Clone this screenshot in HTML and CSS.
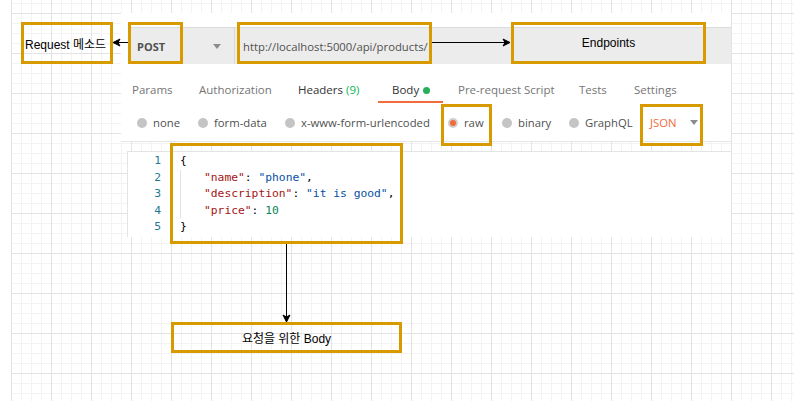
FILE: index.html
```html
<!DOCTYPE html>
<html lang="ko">
<head>
<meta charset="utf-8">
<title>Postman request diagram</title>
<link rel="stylesheet" href="styles.css">
</head>
<body>
<div class="canvas">
  <section class="shot">
    <div class="urlbar">
      <div class="method"><span class="method-name">POST</span><span class="caret"></span></div>
      <div class="url">http://localhost:5000/api/products/</div>
    </div>
    <nav class="tabs">
      <span class="tab t-params">Params</span>
      <span class="tab t-auth">Authorization</span>
      <span class="tab t-headers strong">Headers <span class="count">(9)</span></span>
      <span class="tab t-body strong active">Body <span class="dot"></span></span>
      <span class="tab t-pre">Pre-request Script</span>
      <span class="tab t-tests">Tests</span>
      <span class="tab t-settings">Settings</span>
    </nav>
    <div class="bodytypes">
      <span class="opt o-none"><span class="radio"></span>none</span>
      <span class="opt o-form"><span class="radio"></span>form-data</span>
      <span class="opt o-url"><span class="radio"></span>x-www-form-urlencoded</span>
      <span class="opt o-raw"><span class="radio on"></span>raw</span>
      <span class="opt o-bin"><span class="radio"></span>binary</span>
      <span class="opt o-gql"><span class="radio"></span>GraphQL</span>
      <span class="opt o-json"><span class="json">JSON</span><span class="caret"></span></span>
    </div>
  </section>

  <section class="code">
    <div class="gutter">
      <div>1</div><div>2</div><div>3</div><div>4</div><div>5</div>
    </div>
    <div class="lines">
      <div class="ln">{</div>
      <div class="ln"><span class="ind"></span><span class="k">"name"</span>: <span class="s">"phone"</span>,</div>
      <div class="ln"><span class="ind"></span><span class="k">"description"</span>: <span class="s">"it is good"</span>,</div>
      <div class="ln"><span class="ind"></span><span class="k">"price"</span>: <span class="n">10</span></div>
      <div class="ln">}</div>
    </div>
  </section>

  <svg class="edges" width="794" height="401" viewBox="0 0 794 401">
    <line x1="128" y1="42.5" x2="118" y2="42.5" stroke="#000" stroke-width="1"/>
    <polygon points="113,42.5 120,39 118,42.5 120,46" fill="#000" stroke="#000" stroke-width="1"/>
    <line x1="432" y1="42.5" x2="505" y2="42.5" stroke="#000" stroke-width="1"/>
    <polygon points="510,42.5 503,39 505,42.5 503,46" fill="#000" stroke="#000" stroke-width="1"/>
    <line x1="286.5" y1="244" x2="286.5" y2="317" stroke="#000" stroke-width="1"/>
    <polygon points="286.5,322 283,315 286.5,317 290,315" fill="#000" stroke="#000" stroke-width="1"/>
  </svg>

  <div class="node n-request"><span>Request 메소드</span></div>
  <div class="node n-post"></div>
  <div class="node n-url"></div>
  <div class="node n-endpoints"><span>Endpoints</span></div>
  <div class="node n-raw"></div>
  <div class="node n-json"></div>
  <div class="node n-code"></div>
  <div class="node n-body"><span>요청을 위한 Body</span></div>
</div>
</body>
</html>
```

FILE: styles.css
```css
html, body {
  margin: 0;
  padding: 0;
  background: #ffffff;
}

.canvas {
  position: relative;
  width: 794px;
  height: 401px;
  overflow: hidden;
  background-color: #ffffff;
  background-image:
    linear-gradient(90deg, #ffffff 11px, transparent 11px),
    linear-gradient(#e3e3e3 1px, transparent 1px),
    linear-gradient(90deg, #e3e3e3 1px, transparent 1px),
    linear-gradient(#f3f3f3 1px, transparent 1px),
    linear-gradient(90deg, #f3f3f3 1px, transparent 1px);
  background-size:
    100% 100%,
    40px 40px,
    40px 40px,
    10px 10px,
    10px 10px;
  background-position:
    0 0,
    11px 13px,
    11px 13px,
    11px 13px,
    11px 13px;
  background-repeat: no-repeat, repeat, repeat, repeat, repeat;
  font-family: "Liberation Sans", "Noto Sans CJK KR", sans-serif;
}

/* ---------- Postman screenshot part ---------- */
.shot {
  position: absolute;
  left: 121px;
  top: 13px;
  width: 610px;
  height: 129px;
  box-sizing: border-box;
  background: #ffffff;
  border-bottom: 1px solid #e6e6e6;
  font-family: "Open Sans", "Noto Sans", sans-serif;
  font-size: 11.5px;
  display: flex;
  flex-direction: column;
}

.urlbar {
  margin: 14px 0 0 7px;
  height: 37px;
  box-sizing: border-box;
  background: #ececec;
  border-top: 1px solid #dcdcdc;
  display: flex;
  align-items: center;
  color: #505050;
}

.method {
  width: 107px;
  height: 100%;
  box-sizing: border-box;
  border-right: 1px solid #dadada;
  padding-left: 9px;
  display: flex;
  align-items: center;
}

.method-name {
  font-weight: 700;
  font-size: 11px;
  color: #505050;
}

.caret {
  width: 0;
  height: 0;
  border-left: 4px solid transparent;
  border-right: 4px solid transparent;
  border-top: 5px solid #8c8c8c;
}

.method .caret {
  margin-left: auto;
  margin-right: 13px;
}

.url {
  padding-left: 8px;
  font-size: 11.3px;
  color: #505050;
}

.tabs {
  display: flex;
  height: 39px;
}

.tab {
  box-sizing: border-box;
  height: 39px;
  padding-top: 18px;
  line-height: 16px;
  color: #757575;
  white-space: nowrap;
  border-bottom: 2px solid transparent;
}

.tab.strong { color: #333333; }
.tab .count { color: #0cb55a; }
.tab.active { border-bottom-color: #f26b3a; }

.t-params   { width: 64px;  padding-left: 11px; }
.t-auth     { width: 100px; padding-left: 14px; }
.t-headers  { width: 93px;  padding-left: 13px; }
.t-body     { width: 65px;  padding-left: 14px; }
.t-pre      { width: 122px; padding-left: 15px; }
.t-tests    { width: 55px;  padding-left: 14px; }
.t-settings { padding-left: 14px; }

.dot {
  display: inline-block;
  width: 7px;
  height: 7px;
  border-radius: 50%;
  background: #26b05c;
  margin-left: 1px;
  vertical-align: 0;
}

.bodytypes {
  display: flex;
  align-items: center;
  height: 38px;
  padding-left: 16px;
  padding-top: 1px;
  box-sizing: border-box;
  color: #505050;
  font-size: 11.3px;
}

.opt {
  display: flex;
  align-items: center;
  white-space: nowrap;
}

.radio {
  width: 10px;
  height: 10px;
  border-radius: 50%;
  background: #c4c4c4;
  margin-right: 6px;
  box-sizing: border-box;
}

.radio.on {
  background: #f26b3a;
  border: 2px solid #cfcfcf;
}

.o-none { width: 61px; }
.o-form { width: 87px; }
.o-url  { width: 163px; }
.o-raw  { width: 54px; }
.o-bin  { width: 67px; }
.o-gql  { width: 81px; }
.o-json { width: 60px; }

.json {
  color: #f26b3a;
}

.o-json .caret {
  margin-left: auto;
  margin-right: 12px;
}

/* ---------- code editor ---------- */
.code {
  position: absolute;
  left: 127px;
  top: 151px;
  width: 604px;
  height: 86px;
  box-sizing: border-box;
  background: #ffffff;
  border-top: 1px solid #e4e4e4;
  border-left: 1px solid #e4e4e4;
  display: flex;
  padding-top: 1px;
  font-family: "DejaVu Sans Mono", "Liberation Mono", monospace;
  font-size: 11.3px;
  line-height: 16.6px;
}

.gutter {
  width: 33px;
  text-align: right;
  color: #237893;
}

.lines {
  padding-left: 19px;
  color: #000000;
}

.ln {
  white-space: nowrap;
  height: 16.6px;
}

.ind {
  display: inline-block;
  width: 24px;
  height: 16.6px;
  box-sizing: border-box;
  border-left: 1px solid #e3e3e3;
  vertical-align: top;
}

.k { color: #a31515; }
.s { color: #0451a5; }
.n { color: #098658; }

/* ---------- diagram edges & nodes ---------- */
.edges {
  position: absolute;
  left: 0;
  top: 0;
  pointer-events: none;
}

.node {
  position: absolute;
  box-sizing: border-box;
  border: 3px solid #d79b00;
  display: flex;
  align-items: center;
  justify-content: center;
  font-size: 12px;
  color: #000000;
  white-space: nowrap;
}

.n-request   { left: 21px;  top: 22px;  width: 92px;  height: 42px; justify-content: flex-start; padding-left: 1px; }
.n-post      { left: 128px; top: 22px;  width: 55px;  height: 42px; }
.n-url       { left: 237px; top: 22px;  width: 195px; height: 42px; }
.n-endpoints { left: 511px; top: 22px;  width: 195px; height: 42px; }
.n-raw       { left: 441px; top: 104px; width: 51px;  height: 42px; }
.n-json      { left: 640px; top: 104px; width: 63px;  height: 42px; }
.n-code      { left: 170px; top: 143px; width: 233px; height: 101px; }
.n-body      { left: 171px; top: 322px; width: 231px; height: 31px; }
```
